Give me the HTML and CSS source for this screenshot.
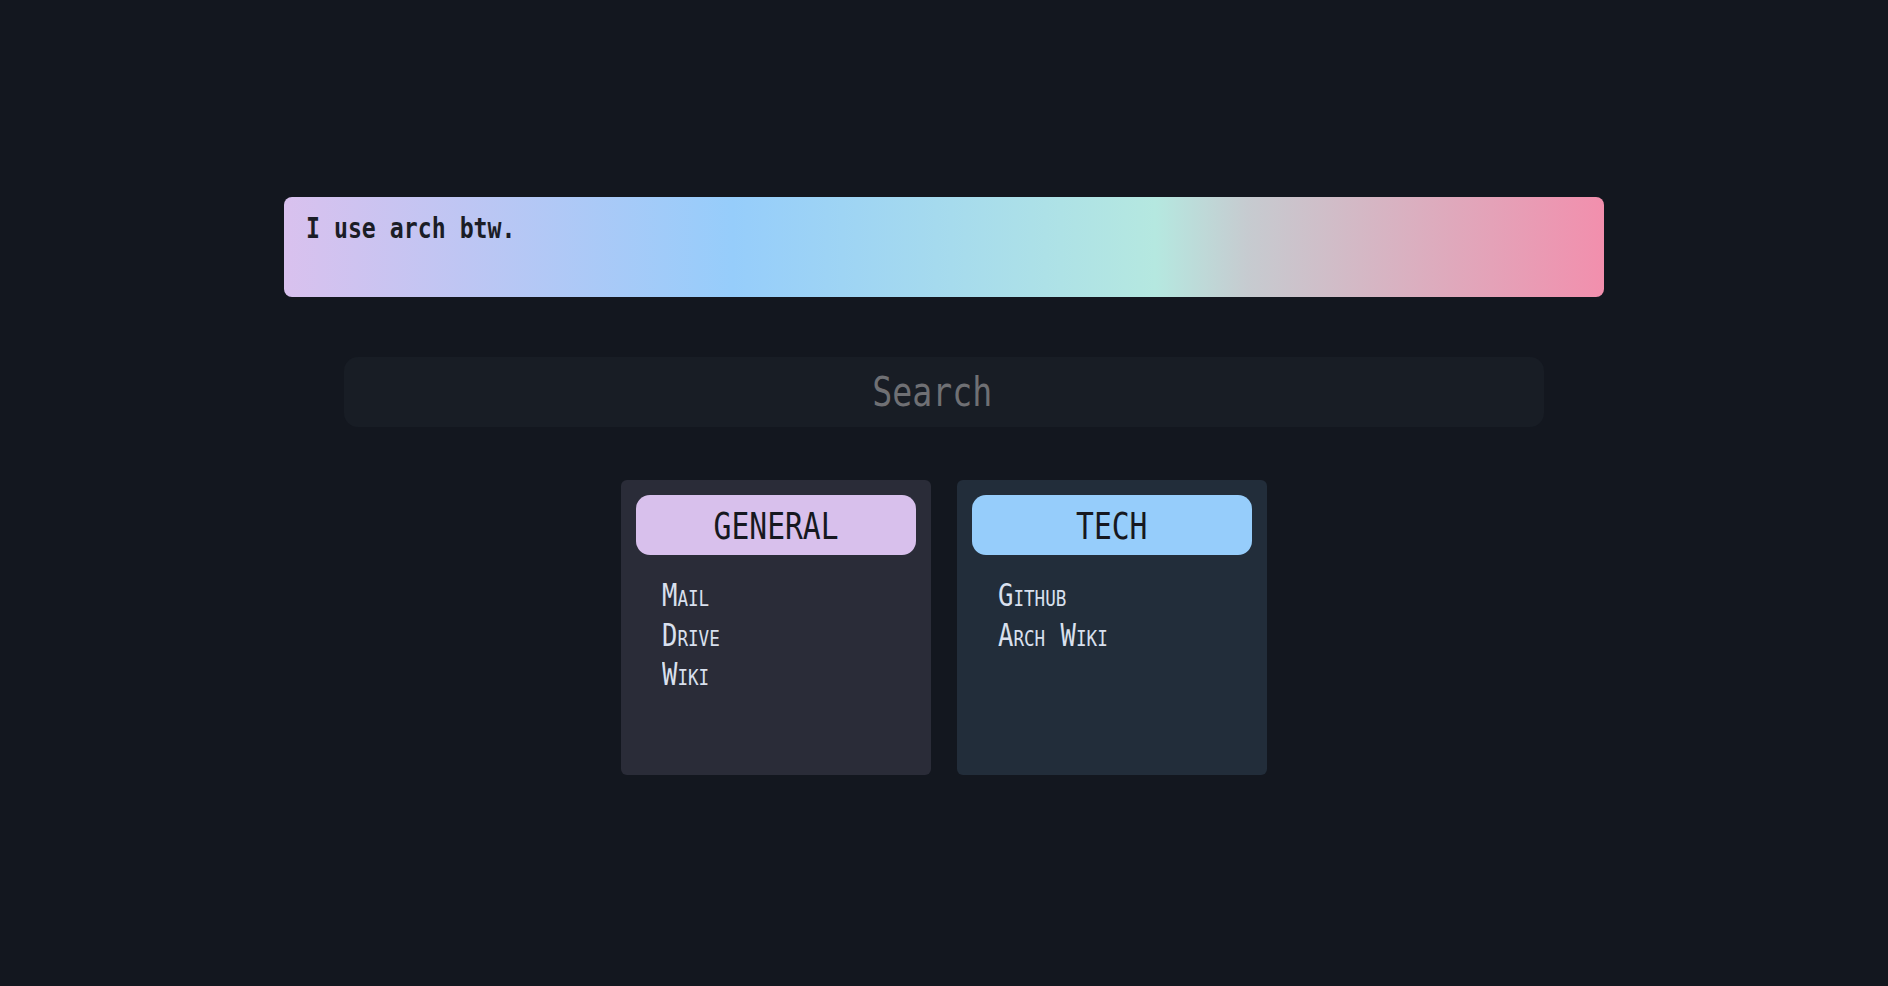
FILE: index.html
```html
<!DOCTYPE html>
<html lang="en">
<head>
<meta charset="utf-8">
<title>Startpage</title>
<link rel="stylesheet" href="styles.css">
</head>
<body>
<main class="page">
  <header class="banner">
    <span class="banner-text">I use arch btw.</span>
  </header>
  <div class="search">
    <span class="search-text">Search</span>
  </div>
  <section class="cards">
    <div class="card card-general">
      <div class="card-head head-general"><span class="head-text">GENERAL</span></div>
      <ul class="links">
        <li><span class="link">Mail</span></li>
        <li><span class="link">Drive</span></li>
        <li><span class="link">Wiki</span></li>
      </ul>
    </div>
    <div class="card card-tech">
      <div class="card-head head-tech"><span class="head-text">TECH</span></div>
      <ul class="links">
        <li><span class="link">Github</span></li>
        <li><span class="link">Arch Wiki</span></li>
      </ul>
    </div>
  </section>
</main>
</body>
</html>
```

FILE: styles.css
```css
html, body {
  margin: 0;
  padding: 0;
}

body {
  background: #13171f;
  min-height: 100vh;
  font-family: "DejaVu Sans Mono", "Liberation Mono", monospace;
}

.page {
  display: flex;
  flex-direction: column;
  align-items: center;
  padding-top: 197px;
}

.banner {
  box-sizing: border-box;
  width: 1320px;
  height: 100px;
  padding: 14px 22px;
  border-radius: 8px;
  background: linear-gradient(to right, #d9c1ee 0%, #96cdfb 34%, #b5e8e0 66%, #c6cbd0 73%, #f28fad 100%);
}

.banner-text {
  display: inline-block;
  font-size: 29px;
  font-weight: bold;
  color: #1b1d26;
  transform: scaleX(0.8);
  transform-origin: left center;
  white-space: pre;
}

.search {
  box-sizing: border-box;
  margin-top: 60px;
  width: 1200px;
  height: 70px;
  padding-right: 24px;
  border-radius: 14px;
  background: #181d25;
  display: flex;
  align-items: center;
  justify-content: center;
}

.search-text {
  display: inline-block;
  font-size: 40px;
  color: #6f7074;
  transform: scaleX(0.83);
  transform-origin: center;
}

.cards {
  margin-top: 53px;
  display: flex;
  gap: 26px;
}

.card {
  box-sizing: border-box;
  width: 310px;
  height: 295px;
  padding: 15px;
  border-radius: 6px;
}

.card-general {
  background: #2a2c38;
}

.card-tech {
  background: #222d3a;
}

.card-head {
  box-sizing: border-box;
  height: 60px;
  padding-top: 2px;
  border-radius: 14px;
  display: flex;
  align-items: center;
  justify-content: center;
}

.head-general {
  background: #d8c0ec;
}

.head-tech {
  background: #96cdfb;
}

.head-text {
  display: inline-block;
  font-size: 38px;
  color: #161820;
  transform: scaleX(0.78);
  transform-origin: center;
}

.links {
  list-style: none;
  margin: 0;
  padding: 21px 26px;
}

.links li {
  font-size: 32px;
  line-height: 39.5px;
  height: 39.5px;
}

.link {
  display: inline-block;
  font-variant: small-caps;
  color: #d9e0ee;
  transform: scaleX(0.8);
  transform-origin: left center;
  white-space: pre;
}
```
